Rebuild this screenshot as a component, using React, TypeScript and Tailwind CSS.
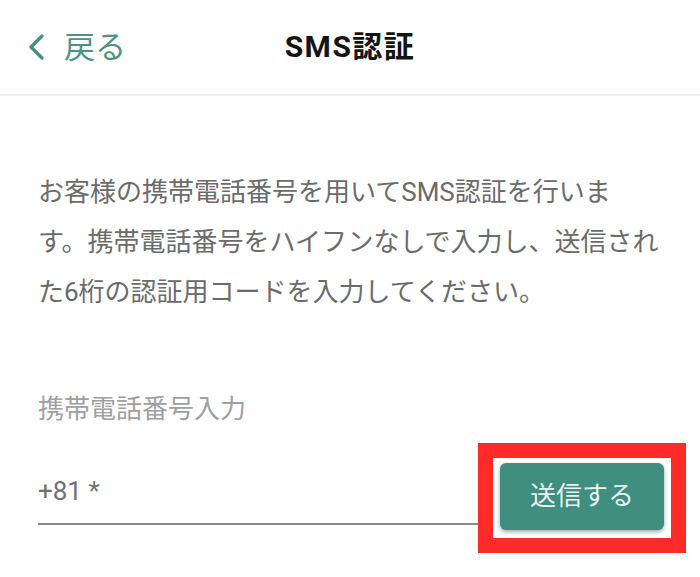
import React from "react";

export default function App() {
  return (
    <div
      className="w-[700px] h-[577px] bg-white overflow-hidden"
      style={{ fontFamily: 'Roboto, "Noto Sans CJK JP", sans-serif' }}
    >
      <header className="h-[96px] grid grid-cols-[1fr_auto_1fr] items-center border-b-2 border-[#efefef]">
        <div className="flex items-center pl-[26px] text-[#4f9282]">
          <svg width="22" height="28" viewBox="0 0 22 28" className="mr-[16px]">
            <path d="M16 3 L5 14 L16 25" fill="none" stroke="#4b8f7e" strokeWidth="3.4" strokeLinecap="round" strokeLinejoin="round" />
          </svg>
          <span className="text-[31px] leading-none">戻る</span>
        </div>
        <h1 className="text-[30px] font-bold text-[#141414] tracking-[1.5px] leading-none">SMS認証</h1>
        <div />
      </header>
      <main className="pl-[38px] pr-[14px] pt-[71px]">
        <p className="text-[26px] leading-[50px] text-[#6b6b6b]">
          お客様の携帯電話番号を用いてSMS認証を行いま
          <br />
          す。携帯電話番号をハイフンなしで入力し、送信され
          <br />
          た6桁の認証用コードを入力してください。
        </p>
        <div className="mt-[75px] text-[26px] leading-[34px] text-[#a0a0a0]">携帯電話番号入力</div>
        <div className="mt-[17px] flex items-start">
          <div className="flex-1 h-[82px] flex flex-col justify-end border-b-2 border-[#8a8a8a] pb-[17px]">
            <span className="text-[26px] leading-[30px] text-[#707070]">+81 *</span>
          </div>
          <div className="border-[15px] border-[#ff2b2b] px-[7px] pt-[5px] pb-[8px] bg-white">
            <button className="w-[164px] h-[67px] rounded-[6px] bg-[#3f8e7f] text-[#e6f4ef] text-[26px] shadow-[0_2px_4px_rgba(0,0,0,0.35)]">
              送信する
            </button>
          </div>
        </div>
      </main>
    </div>
  );
}
